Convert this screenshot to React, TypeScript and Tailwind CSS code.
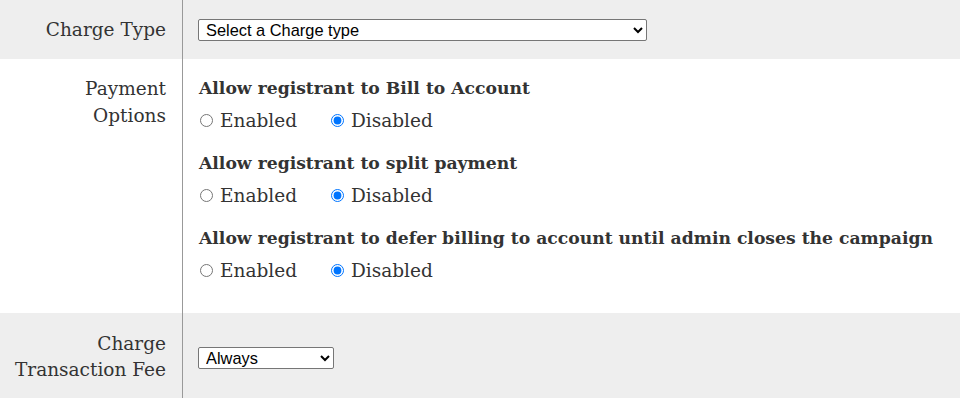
import React from "react";

const serif = { fontFamily: '"DejaVu Serif", "Liberation Serif", serif' };
const sans = { fontFamily: '"Liberation Sans", Arial, sans-serif' };

function Radio({ name, checked, label }: { name: string; checked: boolean; label: string }) {
  return (
    <label className="flex items-center gap-[7px]">
      <input type="radio" name={name} defaultChecked={checked} className="m-0 ml-[1px] h-[13px] w-[13px] accent-[#0075ff]" />
      <span>{label}</span>
    </label>
  );
}

function Option({ title, name }: { title: string; name: string }) {
  return (
    <div className="flex flex-col">
      <div className="h-[27px] leading-[27px] font-bold text-[17.2px] whitespace-nowrap">{title}</div>
      <div className="mt-[5px] flex h-[27px] items-center gap-[33px] leading-[27px]">
        <Radio name={name} checked={false} label="Enabled" />
        <Radio name={name} checked={true} label="Disabled" />
      </div>
    </div>
  );
}

export default function App() {
  const selectCls =
    "h-[22px] border border-[#767676] rounded-[2px] bg-white text-[16.4px] leading-[20px] text-black pl-[3px] appearance-auto";
  return (
    <div className="w-[960px] h-[398px] overflow-hidden bg-white text-[#333] text-[18.5px]" style={serif}>
      <div className="flex h-[59px] bg-[#eeeeee]">
        <div className="w-[183px] shrink-0 border-r border-[#999] flex items-center justify-end pr-[16px] leading-[27px] whitespace-nowrap">
          Charge Type
        </div>
        <div className="flex items-center pl-[15px] pt-[1px]">
          <select className={selectCls + " w-[449px]"} style={sans}>
            <option>Select a Charge type</option>
          </select>
        </div>
      </div>
      <div className="flex h-[254px] bg-white">
        <div className="w-[183px] shrink-0 border-r border-[#999] pr-[16px] pt-[16px] text-right leading-[27px]">
          Payment
          <br />
          Options
        </div>
        <div className="flex flex-col gap-[16px] pl-[16px] pt-[16px]">
          <Option title="Allow registrant to Bill to Account" name="bill" />
          <Option title="Allow registrant to split payment" name="split" />
          <Option title="Allow registrant to defer billing to account until admin closes the campaign" name="defer" />
        </div>
      </div>
      <div className="flex h-[85px] bg-[#eeeeee]">
        <div className="w-[183px] shrink-0 border-r border-[#999] flex flex-col items-end justify-center pr-[16px] pt-[2px] text-right leading-[26px] whitespace-nowrap">
          <span>Charge</span>
          <span>Transaction Fee</span>
        </div>
        <div className="flex items-center pl-[15px] pt-[5px]">
          <select className={selectCls + " w-[136px]"} style={sans}>
            <option>Always</option>
          </select>
        </div>
      </div>
    </div>
  );
}
